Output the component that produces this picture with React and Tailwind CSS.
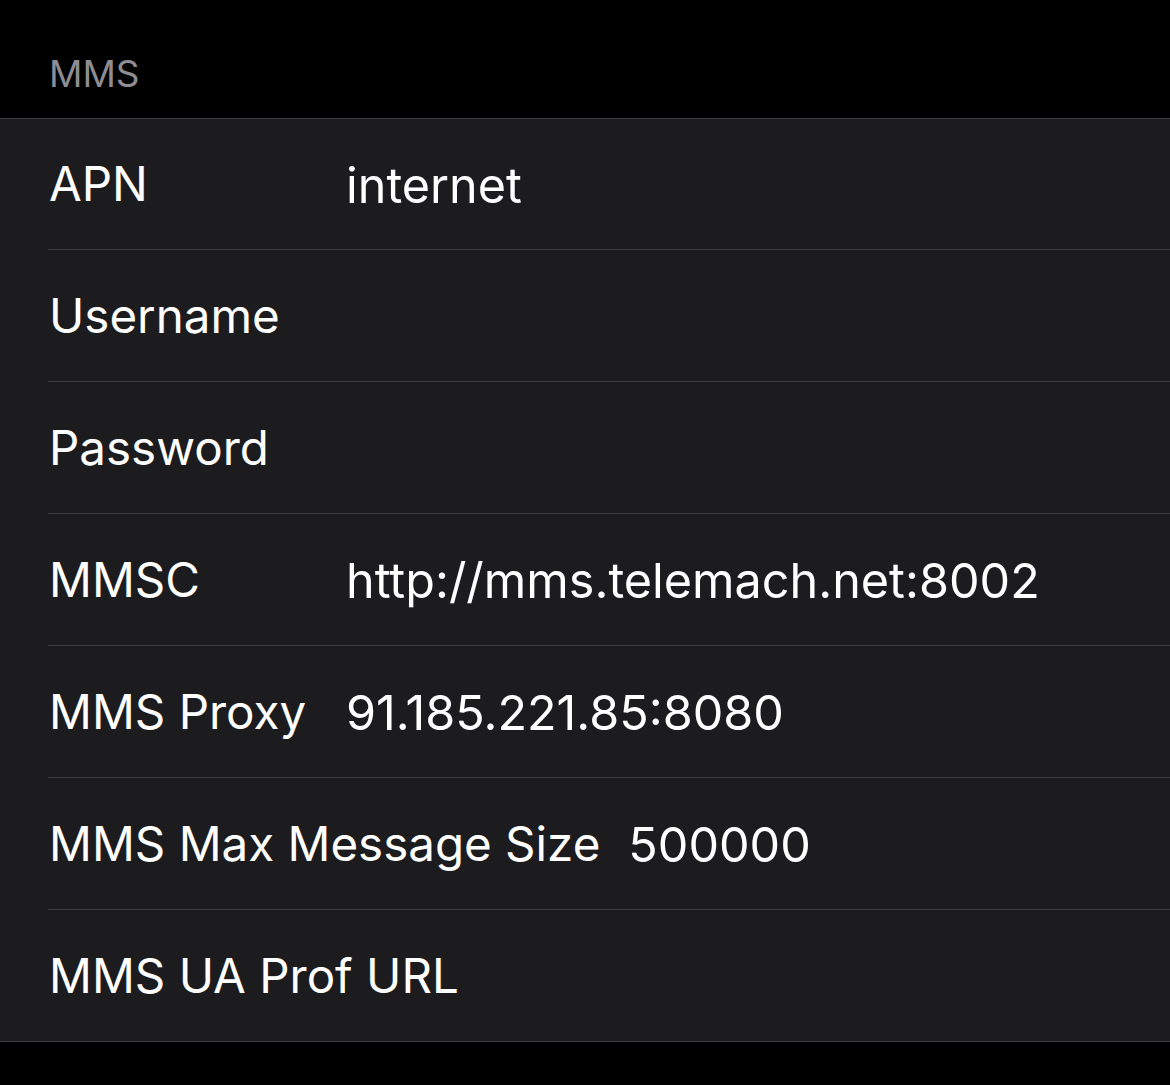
export default function App() {
  const rows = [
    ["APN", "internet"],
    ["Username", ""],
    ["Password", ""],
    ["MMSC", "http://mms.telemach.net:8002"],
    ["MMS Proxy", "91.185.221.85:8080"],
    ["MMS Max Message Size", "500000"],
    ["MMS UA Prof URL", ""],
  ];
  return (
    <div className="w-[1170px] h-[1085px] bg-black text-white overflow-hidden" style={{ fontFamily: 'Inter, "Noto Sans", sans-serif' }}>
      <div className="h-[118px] pl-[49px] pt-[52px] text-[37px] leading-[44px] text-[#8d8d93]">MMS</div>
      <div className="bg-[#1c1c1e] border-t border-b border-[#3d3d41]">
        {rows.map(([label, value], i) => (
          <div key={label} className="pl-[48px]">
            <div
              className={`flex items-center ${
                i === 0 ? "h-[131px]" : i === rows.length - 1 ? "h-[131px]" : "h-[132px]"
              } ${i < rows.length - 1 ? "border-b border-[#3d3d41]" : ""}`}
            >
              <div className="min-w-[270px] mr-[28px] pl-[1px] text-[47.5px]">{label}</div>
              <div className="text-[48.5px] pt-[4px]">{value}</div>
            </div>
          </div>
        ))}
      </div>
    </div>
  );
}
